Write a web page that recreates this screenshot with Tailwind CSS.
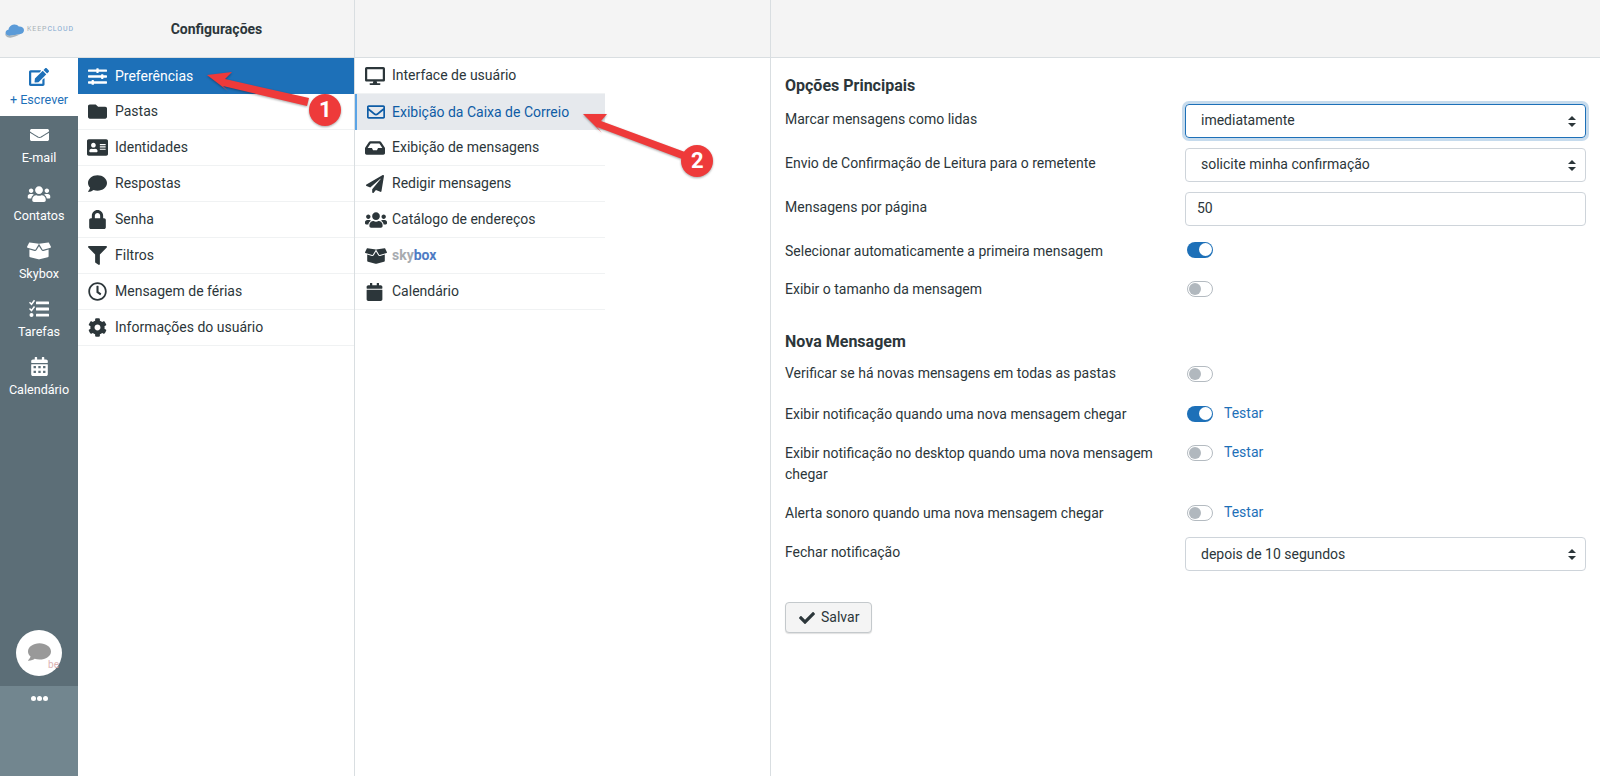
<!DOCTYPE html>
<html lang="pt-BR">
<head>
    <meta charset="UTF-8">
    <title>Configurações</title>
    <script src="https://cdn.jsdelivr.net/npm/@tailwindcss/browser@4"></script>
</head>
<body class="relative h-[776px] w-[1600px] overflow-hidden bg-white font-['Roboto',sans-serif] text-sm leading-[21px] text-[#2c363a]">

    <!-- Top bar -->
    <header class="flex h-[58px] border-b border-[#d9dee1] bg-[#f4f4f4]">
        <div class="flex w-[78px] items-center pl-[5px] pt-[2px]">
            <svg class="h-[16px] w-[20px] shrink-0" viewBox="0 0 20 16"><path fill="#5b9bd8" d="M4 14c-2.4-.3-3.800-2-3.400-3.800.3-1.300 1.400-2.200 2.800-2.400C3.800 5 6 2.800 9 2.600c2-.2 3.800.6 4.800 2 2.800-.3 5 1.300 5.200 3.400.2 2.300-1.800 4-4.500 4.300-3.500.5-7 1.400-10.500 1.700z"/><path fill="#aab4ba" d="M0 11c1 2 3 3 6 2.600 3-.3 6-1.300 9-1.300-3 1.800-7 3.500-10 3.400-3 0-5-2-5-4.700z"/></svg>
            <span class="ml-[2px] whitespace-nowrap text-[7px] leading-none tracking-[0.9px] text-[#a8b1b6]">KEEP<span class="text-[#7fa8d0]">CLOUD</span></span>
        </div>
        <div class="flex w-[277px] items-center justify-center border-r border-[#d9dee1] pl-[1px] text-sm font-bold">Configurações</div>
        <div class="w-[416px] border-r border-[#d9dee1]"></div>
        <div class="flex-1"></div>
    </header>

    <div class="flex h-[718px]">
        <!-- Icon rail -->
        <nav class="flex w-[78px] flex-col text-center text-[12.6px] leading-[15px] text-white">
            <a class="flex h-[58px] flex-col items-center bg-white pt-[10px] text-[#1d70b8]">
                <svg class="mb-[6px] h-[18px] w-[20px]" viewBox="0 0 576 512" fill="currentColor"><path d="M402.6 83.2l90.2 90.2c3.8 3.8 3.8 10 0 13.8L274.4 405.6l-92.8 10.3c-12.4 1.4-22.9-9.1-21.5-21.5l10.3-92.8L388.8 83.2c3.8-3.8 10-3.8 13.8 0zm162-22.9l-48.8-48.8c-15.2-15.2-39.9-15.2-55.2 0l-35.4 35.4c-3.8 3.8-3.8 10 0 13.8l90.2 90.2c3.8 3.8 10 3.8 13.8 0l35.4-35.4c15.2-15.3 15.2-40 0-55.2zM384 346.2V448H64V128h229.8c3.2 0 6.2-1.3 8.5-3.5l40-40c7.6-7.6 2.2-20.5-8.5-20.5H48C21.5 64 0 85.5 0 112v352c0 26.5 21.5 48 48 48h352c26.5 0 48-21.5 48-48V306.2c0-10.7-12.9-16-20.5-8.5l-40 40c-2.2 2.3-3.5 5.3-3.5 8.5z"/></svg>
                + Escrever
            </a>
            <div class="flex flex-1 flex-col bg-[#5c6e77]">
                <a class="flex h-[58px] flex-col items-center pt-[11px]">
                    <svg class="mb-[7px] h-[16px] w-[19px]" viewBox="0 0 512 512" fill="currentColor" preserveAspectRatio="none"><path d="M502.3 190.8c3.9-3.1 9.7-.2 9.7 4.7V400c0 26.5-21.5 48-48 48H48c-26.5 0-48-21.5-48-48V195.6c0-5 5.7-7.8 9.7-4.7 22.4 17.4 52.1 39.5 154.1 113.6 21.1 15.4 56.7 47.8 92.2 47.6 35.7.3 72-32.8 92.3-47.6 102-74.1 131.6-96.3 154-113.7zM256 320c23.2.4 56.6-29.2 73.4-41.4 132.7-96.3 142.8-104.7 173.4-128.7 5.8-4.5 9.2-11.5 9.2-18.9v-19c0-26.5-21.5-48-48-48H48C21.5 64 0 85.5 0 112v19c0 7.4 3.4 14.3 9.2 18.9 30.6 23.9 40.7 32.4 173.4 128.7 16.8 12.2 50.2 41.8 73.4 41.4z"/></svg>
                    E-mail
                </a>
                <a class="flex h-[58px] flex-col items-center pt-[11px]">
                    <svg class="mb-[5px] h-[18px] w-[24px]" viewBox="0 0 640 512" fill="currentColor"><path d="M96 224c35.3 0 64-28.7 64-64s-28.7-64-64-64-64 28.7-64 64 28.7 64 64 64zm448 0c35.3 0 64-28.7 64-64s-28.7-64-64-64-64 28.7-64 64 28.7 64 64 64zm32 32h-64c-17.6 0-33.5 7.1-45.1 18.6 40.3 22.1 68.9 62 75.1 109.4h66c17.7 0 32-14.3 32-32v-32c0-35.3-28.7-64-64-64zm-256 0c61.9 0 112-50.1 112-112S381.9 32 320 32 208 82.1 208 144s50.1 112 112 112zm76.8 32h-8.3c-20.8 10-43.9 16-68.5 16s-47.6-6-68.5-16h-8.3C179.6 288 128 339.6 128 403.2V432c0 26.5 21.5 48 48 48h288c26.5 0 48-21.5 48-48v-28.8c0-63.6-51.6-115.2-115.2-115.2zm-223.7-13.4C161.5 263.1 145.6 256 128 256H64c-35.3 0-64 28.7-64 64v32c0 17.7 14.3 32 32 32h65.9c6.3-47.4 34.9-87.3 75.2-109.4z"/></svg>
                    Contatos
                </a>
                <a class="flex h-[58px] flex-col items-center pt-[9px]">
                    <svg class="mb-[5px] h-[20px] w-[24px]" viewBox="0 0 640 512" fill="currentColor"><path d="M425.7 256c-16.9 0-32.8-9-41.4-23.4L320 126l-64.2 106.6c-8.7 14.5-24.6 23.5-41.5 23.5-4.5 0-9-.6-13.3-1.9L64 215v178c0 14.7 10 27.5 24.2 31l216.2 54.1c10.2 2.5 20.9 2.5 31 0L551.8 424c14.2-3.6 24.2-16.4 24.2-31V215l-137 39.1c-4.3 1.3-8.8 1.9-13.3 1.9zm212.6-112.2L586.8 41c-3.1-6.2-9.8-9.8-16.7-8.9L320 64l91.7 152.1c3.8 6.3 11.4 9.3 18.5 7.3l197.9-56.5c9.9-2.9 14.7-13.9 10.2-23.1zM53.2 41L1.7 143.8c-4.6 9.2.3 20.2 10.1 23l197.9 56.5c7.1 2 14.7-1 18.5-7.3L320 64 69.8 32.1c-6.9-.8-13.5 2.7-16.6 8.9z"/></svg>
                    Skybox
                </a>
                <a class="flex h-[58px] flex-col items-center pt-[9px]">
                    <svg class="mb-[5px] h-[20px] w-[20px]" viewBox="0 0 20 20" fill="currentColor"><rect x="7" y="2.5" width="13" height="2.8" rx=".5"/><rect x="7" y="8.6" width="13" height="2.8" rx=".5"/><rect x="7" y="14.7" width="13" height="2.8" rx=".5"/><circle cx="2.5" cy="16" r="2"/><path d="M.5 3.3l2 2 3-4M.5 9.500l2 2 3-4" fill="none" stroke="currentColor" stroke-width="1.5"/></svg>
                    Tarefas
                </a>
                <a class="flex h-[58px] flex-col items-center pt-[9px]">
                    <svg class="mb-[6px] h-[19px] w-[17px]" viewBox="0 0 448 512" fill="currentColor"><path d="M12 192h424c6.6 0 12 5.4 12 12v260c0 26.5-21.5 48-48 48H48c-26.5 0-48-21.5-48-48V204c0-6.6 5.4-12 12-12zm436-44v-36c0-26.5-21.5-48-48-48h-48V12c0-6.6-5.4-12-12-12h-40c-6.6 0-12 5.4-12 12v52H160V12c0-6.6-5.4-12-12-12h-40c-6.6 0-12 5.4-12 12v52H48C21.5 64 0 85.5 0 112v36c0 6.6 5.4 12 12 12h424c6.6 0 12-5.4 12-12z"/><path fill="#5c6e77" d="M64 240h64v64H64zM192 240h64v64h-64zM320 240h64v64h-64zM64 368h64v64H64zM192 368h64v64h-64zM320 368h64v64h-64z"/></svg>
                    Calendário
                </a>
                <div class="mt-auto flex h-[56px] items-end justify-center pb-[10px]">
                    <div class="relative flex h-[46px] w-[46px] items-center justify-center rounded-full bg-white">
                        <svg class="mb-[3px] h-[20px] w-[23px]" viewBox="0 0 512 512" fill="#999" preserveAspectRatio="none"><path d="M256 32C114.6 32 0 125.1 0 240c0 49.6 21.4 95 57 130.7C44.5 421.1 2.7 466 2.2 466.5c-2.2 2.3-2.8 5.7-1.5 8.7S4.8 480 8 480c66.3 0 116-31.8 140.6-51.4 32.7 12.3 69 19.4 107.4 19.4 141.4 0 256-93.1 256-208S397.4 32 256 32z"/></svg>
                        <span class="absolute right-[3px] bottom-[6px] text-[10px] leading-none text-[#dcb4b4]">be</span>
                    </div>
                </div>
            </div>
            <div class="flex h-[90px] justify-center bg-[#72868f] pt-[10px]">
                <span class="flex h-[6px] gap-[1px]">
                    <i class="h-[5px] w-[5px] rounded-full bg-white"></i><i class="h-[5px] w-[5px] rounded-full bg-white"></i><i class="h-[5px] w-[5px] rounded-full bg-white"></i>
                </span>
            </div>
        </nav>

        <!-- Settings sections -->
        <ul class="w-[277px] border-r border-[#d9dee1]">
            <li class="flex h-[36px] items-center bg-[#1d70b8] pl-[10px] text-white">
                <svg class="mr-[8px] h-[19px] w-[19px]" viewBox="0 0 512 512" fill="currentColor"><path d="M496 384H160v-16c0-8.8-7.2-16-16-16h-32c-8.8 0-16 7.2-16 16v16H16c-8.8 0-16 7.2-16 16v32c0 8.8 7.2 16 16 16h80v16c0 8.8 7.2 16 16 16h32c8.8 0 16-7.2 16-16v-16h336c8.8 0 16-7.2 16-16v-32c0-8.8-7.2-16-16-16zm0-160h-80v-16c0-8.8-7.2-16-16-16h-32c-8.8 0-16 7.2-16 16v16H16c-8.8 0-16 7.2-16 16v32c0 8.8 7.2 16 16 16h336v16c0 8.8 7.2 16 16 16h32c8.8 0 16-7.2 16-16v-16h80c8.8 0 16-7.2 16-16v-32c0-8.8-7.2-16-16-16zm0-160H288V48c0-8.8-7.2-16-16-16h-32c-8.8 0-16 7.2-16 16v16H16C7.2 64 0 71.2 0 80v32c0 8.8 7.2 16 16 16h208v16c0 8.8 7.2 16 16 16h32c8.8 0 16-7.2 16-16v-16h208c8.8 0 16-7.2 16-16V80c0-8.8-7.2-16-16-16z"/></svg>
                Preferências
            </li>
            <li class="flex h-[36px] items-center border-b border-[#f0f2f3] pl-[10px]">
                <svg class="mr-[8px] h-[19px] w-[19px]" viewBox="0 0 512 512" fill="currentColor"><path d="M464 128H272l-64-64H48C21.49 64 0 85.49 0 112v288c0 26.51 21.49 48 48 48h416c26.51 0 48-21.49 48-48V176c0-26.51-21.49-48-48-48z"/></svg>
                Pastas
            </li>
            <li class="flex h-[36px] items-center border-b border-[#f0f2f3] pl-[9px]">
                <svg class="mr-[7px] h-[19px] w-[21px]" viewBox="0 0 576 512" fill="currentColor"><path d="M528 32H48C21.5 32 0 53.5 0 80v352c0 26.5 21.5 48 48 48h480c26.5 0 48-21.5 48-48V80c0-26.5-21.5-48-48-48zm-352 96c35.3 0 64 28.7 64 64s-28.7 64-64 64-64-28.7-64-64 28.7-64 64-64zm112 236.8c0 10.6-10 19.2-22.4 19.2H86.4C74 384 64 375.4 64 364.8v-19.2c0-31.8 30.1-57.6 67.2-57.6h5c12.3 5.1 25.7 8 39.8 8s27.6-2.9 39.8-8h5c37.1 0 67.2 25.8 67.2 57.6v19.2zM512 312c0 4.4-3.6 8-8 8H360c-4.4 0-8-3.6-8-8v-16c0-4.4 3.6-8 8-8h144c4.4 0 8 3.6 8 8v16zm0-64c0 4.4-3.6 8-8 8H360c-4.4 0-8-3.6-8-8v-16c0-4.4 3.6-8 8-8h144c4.4 0 8 3.6 8 8v16zm0-64c0 4.4-3.6 8-8 8H360c-4.4 0-8-3.6-8-8v-16c0-4.4 3.6-8 8-8h144c4.4 0 8 3.6 8 8v16z"/></svg>
                Identidades
            </li>
            <li class="flex h-[36px] items-center border-b border-[#f0f2f3] pl-[10px]">
                <svg class="mr-[8px] h-[19px] w-[19px]" viewBox="0 0 512 512" fill="currentColor"><path d="M256 32C114.6 32 0 125.1 0 240c0 49.6 21.4 95 57 130.7C44.5 421.1 2.7 466 2.2 466.5c-2.2 2.3-2.8 5.7-1.5 8.7S4.8 480 8 480c66.3 0 116-31.8 140.6-51.4 32.7 12.3 69 19.4 107.4 19.4 141.4 0 256-93.1 256-208S397.4 32 256 32z"/></svg>
                Respostas
            </li>
            <li class="flex h-[36px] items-center border-b border-[#f0f2f3] pl-[10px]">
                <svg class="mr-[8px] h-[19px] w-[19px]" viewBox="0 0 448 512" fill="currentColor"><path d="M400 224h-24v-72C376 68.2 307.8 0 224 0S72 68.2 72 152v72H48c-26.5 0-48 21.5-48 48v192c0 26.5 21.5 48 48 48h352c26.5 0 48-21.5 48-48V272c0-26.5-21.5-48-48-48zm-104 0H152v-72c0-39.7 32.3-72 72-72s72 32.3 72 72v72z"/></svg>
                Senha
            </li>
            <li class="flex h-[36px] items-center border-b border-[#f0f2f3] pl-[10px]">
                <svg class="mr-[8px] h-[19px] w-[19px]" viewBox="0 0 512 512" fill="currentColor"><path d="M487.976 0H24.028C2.71 0-8.047 25.866 7.058 40.971L192 225.941V432c0 7.831 3.821 15.17 10.237 19.662l80 55.98C298.02 518.69 320 507.493 320 487.98V225.941l184.947-184.97C520.021 25.896 509.338 0 487.976 0z"/></svg>
                Filtros
            </li>
            <li class="flex h-[36px] items-center border-b border-[#f0f2f3] pl-[10px]">
                <svg class="mr-[8px] h-[19px] w-[19px]" viewBox="0 0 512 512" fill="currentColor"><path d="M256 8C119 8 8 119 8 256s111 248 248 248 248-111 248-248S393 8 256 8zm0 448c-110.5 0-200-89.5-200-200S145.5 56 256 56s200 89.5 200 200-89.5 200-200 200zm61.8-104.4l-84.9-61.7c-3.1-2.3-4.9-5.9-4.9-9.7V116c0-6.6 5.4-12 12-12h32c6.6 0 12 5.4 12 12v141.7l66.8 48.6c5.4 3.9 6.5 11.4 2.6 16.8L334.6 349c-3.9 5.3-11.4 6.5-16.8 2.6z"/></svg>
                Mensagem de férias
            </li>
            <li class="flex h-[36px] items-center border-b border-[#f0f2f3] pl-[10px]">
                <svg class="mr-[8px] h-[19px] w-[19px]" viewBox="0 0 512 512" fill="currentColor"><path d="M487.4 315.7l-42.6-24.6c4.3-23.2 4.3-47 0-70.2l42.6-24.6c4.9-2.8 7.1-8.6 5.5-14-11.1-35.6-30-67.8-54.7-94.6-3.8-4.1-10-5.1-14.8-2.3L380.8 110c-17.9-15.4-38.5-27.3-60.8-35.1V25.8c0-5.6-3.9-10.5-9.4-11.7-36.7-8.2-74.3-7.8-109.2 0-5.5 1.2-9.4 6.1-9.4 11.7V75c-22.2 7.9-42.8 19.8-60.8 35.1L88.7 85.5c-4.9-2.8-11-1.9-14.8 2.3-24.7 26.7-43.6 58.9-54.7 94.6-1.7 5.4.6 11.2 5.5 14L67.3 221c-4.3 23.2-4.3 47 0 70.2l-42.6 24.6c-4.9 2.8-7.1 8.6-5.5 14 11.1 35.6 30 67.8 54.7 94.6 3.8 4.1 10 5.1 14.8 2.3l42.6-24.6c17.9 15.4 38.5 27.3 60.8 35.1v49.2c0 5.6 3.9 10.5 9.4 11.7 36.7 8.2 74.3 7.8 109.2 0 5.5-1.2 9.4-6.1 9.4-11.7v-49.2c22.2-7.9 42.8-19.8 60.8-35.1l42.6 24.6c4.9 2.8 11 1.9 14.8-2.3 24.7-26.7 43.6-58.9 54.7-94.6 1.5-5.5-.7-11.3-5.6-14.1zM256 336c-44.1 0-80-35.9-80-80s35.9-80 80-80 80 35.9 80 80-35.9 80-80 80z"/></svg>
                Informações do usuário
            </li>
        </ul>

        <!-- Sub sections -->
        <div class="w-[416px] border-r border-[#d9dee1]">
            <ul class="w-[250px]">
                <li class="flex h-[36px] items-center border-b border-[#f0f2f3] pl-[10px]">
                    <svg class="mr-[7px] h-[18px] w-[20px]" viewBox="0 0 576 512" fill="currentColor"><path d="M528 0H48C21.5 0 0 21.5 0 48v320c0 26.5 21.5 48 48 48h192l-16 48h-72c-13.3 0-24 10.7-24 24s10.7 24 24 24h272c13.3 0 24-10.7 24-24s-10.7-24-24-24h-72l-16-48h192c26.5 0 48-21.5 48-48V48c0-26.5-21.5-48-48-48zm-16 352H64V64h448v288z"/></svg>
                    Interface de usuário
                </li>
                <li class="flex h-[36px] items-center border-l-2 border-[#5ba4e6] bg-[#e6e9ed] pl-[10px] text-[#0e5ca5]">
                    <svg class="mr-[7px] h-[18px] w-[18px]" viewBox="0 0 512 512" fill="currentColor"><path d="M464 64H48C21.49 64 0 85.49 0 112v288c0 26.51 21.49 48 48 48h416c26.51 0 48-21.49 48-48V112c0-26.51-21.49-48-48-48zm0 48v40.805c-22.422 18.259-58.168 46.651-134.587 106.49-16.841 13.247-50.201 45.072-73.413 44.701-23.208.375-56.579-31.459-73.413-44.701C106.18 199.465 70.425 171.067 48 152.805V112h416zM48 400V214.398c22.914 18.251 55.409 43.862 104.938 82.646 21.857 17.205 60.134 55.186 103.062 54.955 42.717.231 80.509-37.199 103.053-54.947 49.528-38.783 82.032-64.401 104.947-82.653V400H48z"/></svg>
                    Exibição da Caixa de Correio
                </li>
                <li class="flex h-[36px] items-center border-b border-[#f0f2f3] pl-[10px]">
                    <svg class="mr-[7px] h-[18px] w-[20px]" viewBox="0 0 576 512" fill="currentColor"><path d="M567.938 243.908L462.25 85.374A48.003 48.003 0 0 0 422.311 64H153.689a48 48 0 0 0-39.938 21.374L8.062 243.908A47.994 47.994 0 0 0 0 270.533V400c0 26.51 21.49 48 48 48h480c26.51 0 48-21.49 48-48V270.533a47.994 47.994 0 0 0-8.062-26.625zM162.252 128h251.497l85.333 128H376l-32 64H232l-32-64H76.918l85.334-128z"/></svg>
                    Exibição de mensagens
                </li>
                <li class="flex h-[36px] items-center border-b border-[#f0f2f3] pl-[11px]">
                    <svg class="mr-[8px] h-[18px] w-[18px]" viewBox="0 0 512 512" fill="currentColor"><path d="M476 3.2L12.5 270.6c-18.1 10.4-15.8 35.6 2.2 43.2L121 358.4l287.3-253.2c5.5-4.9 13.3 2.6 8.6 8.3L176 407v80.5c0 23.6 28.5 32.9 42.5 15.8L282 426l124.6 52.2c14.2 6 30.4-2.9 33-18.2l72-432C515 7.8 493.3-6.8 476 3.2z"/></svg>
                    Redigir mensagens
                </li>
                <li class="flex h-[36px] items-center border-b border-[#f0f2f3] pl-[10px]">
                    <svg class="mr-[5px] h-[18px] w-[22px]" viewBox="0 0 640 512" fill="currentColor"><path d="M96 224c35.3 0 64-28.7 64-64s-28.7-64-64-64-64 28.7-64 64 28.7 64 64 64zm448 0c35.3 0 64-28.7 64-64s-28.7-64-64-64-64 28.7-64 64 28.7 64 64 64zm32 32h-64c-17.6 0-33.5 7.1-45.1 18.6 40.3 22.1 68.9 62 75.1 109.4h66c17.7 0 32-14.3 32-32v-32c0-35.3-28.7-64-64-64zm-256 0c61.9 0 112-50.1 112-112S381.9 32 320 32 208 82.1 208 144s50.1 112 112 112zm76.8 32h-8.3c-20.8 10-43.9 16-68.5 16s-47.6-6-68.5-16h-8.3C179.6 288 128 339.6 128 403.2V432c0 26.5 21.5 48 48 48h288c26.5 0 48-21.5 48-48v-28.8c0-63.6-51.6-115.2-115.2-115.2zm-223.7-13.4C161.5 263.1 145.6 256 128 256H64c-35.3 0-64 28.7-64 64v32c0 17.7 14.3 32 32 32h65.9c6.3-47.4 34.9-87.3 75.2-109.4z"/></svg>
                    Catálogo de endereços
                </li>
                <li class="flex h-[36px] items-center border-b border-[#f0f2f3] pl-[10px] font-bold">
                    <svg class="mr-[5px] h-[18px] w-[22px]" viewBox="0 0 640 512" fill="currentColor"><path d="M425.7 256c-16.9 0-32.8-9-41.4-23.4L320 126l-64.2 106.6c-8.7 14.5-24.6 23.5-41.5 23.5-4.5 0-9-.6-13.3-1.9L64 215v178c0 14.7 10 27.5 24.2 31l216.2 54.1c10.2 2.5 20.9 2.5 31 0L551.8 424c14.2-3.6 24.2-16.4 24.2-31V215l-137 39.1c-4.3 1.3-8.8 1.9-13.3 1.9zm212.6-112.2L586.8 41c-3.1-6.2-9.8-9.8-16.7-8.9L320 64l91.7 152.1c3.8 6.3 11.4 9.3 18.5 7.3l197.9-56.5c9.9-2.9 14.7-13.9 10.2-23.1zM53.2 41L1.7 143.8c-4.6 9.2.3 20.2 10.1 23l197.9 56.5c7.1 2 14.7-1 18.5-7.3L320 64 69.8 32.1c-6.9-.8-13.5 2.7-16.6 8.9z"/></svg>
                    <span class="text-[#a7abb0]">sky</span><span class="text-[#4f7cc4]">box</span>
                </li>
                <li class="flex h-[36px] items-center border-b border-[#f0f2f3] pl-[11px]">
                    <svg class="mr-[9px] h-[18px] w-[17px]" viewBox="0 0 448 512" fill="currentColor"><path d="M12 192h424c6.6 0 12 5.4 12 12v260c0 26.5-21.5 48-48 48H48c-26.5 0-48-21.5-48-48V204c0-6.6 5.4-12 12-12zm436-44v-36c0-26.5-21.5-48-48-48h-48V12c0-6.6-5.4-12-12-12h-40c-6.6 0-12 5.4-12 12v52H160V12c0-6.6-5.4-12-12-12h-40c-6.6 0-12 5.4-12 12v52H48C21.5 64 0 85.5 0 112v36c0 6.6 5.4 12 12 12h424c6.6 0 12-5.4 12-12z"/></svg>
                    Calendário
                </li>
            </ul>
        </div>

        <!-- Options form -->
        <main class="flex-1 pl-[14px]">
            <h2 class="flex h-[46px] items-start pt-[18px] text-base leading-[20px] font-bold">Opções Principais</h2>

            <div class="grid h-[44px] grid-cols-[400px_401px]">
                <label class="pt-[5px]">Marcar mensagens como lidas</label>
                <div class="relative flex h-[34px] items-center rounded border border-[#1d70b8] pb-[1px] pl-[15px] shadow-[0_0_0_3px_rgba(29,112,184,0.25)]">
                    imediatamente
                    <svg class="absolute right-[9px] top-[11px] h-[11px] w-[8px]" viewBox="0 0 8 11" fill="#2c363a"><path d="M4 0l4 4H0zM4 11l4-4H0z"/></svg>
                </div>
            </div>
            <div class="grid h-[44px] grid-cols-[400px_401px]">
                <label class="pt-[5px]">Envio de Confirmação de Leitura para o remetente</label>
                <div class="relative flex h-[34px] items-center rounded border border-[#ced4da] pb-[1px] pl-[15px]">
                    solicite minha confirmação
                    <svg class="absolute right-[9px] top-[11px] h-[11px] w-[8px]" viewBox="0 0 8 11" fill="#2c363a"><path d="M4 0l4 4H0zM4 11l4-4H0z"/></svg>
                </div>
            </div>
            <div class="grid h-[47px] grid-cols-[400px_401px]">
                <label class="pt-[5px]">Mensagens por página</label>
                <div class="flex h-[34px] items-center rounded border border-[#ced4da] pb-[1px] pl-[11px]">50</div>
            </div>
            <div class="grid h-[39px] grid-cols-[400px_401px]">
                <label class="pt-[2px]">Selecionar automaticamente a primeira mensagem</label>
                <div class="flex h-[21px] items-center">
                    <span class="ml-[2px] flex h-[16px] w-[26px] items-center justify-end rounded-full bg-[#1d70b8] pr-[1px]"><i class="h-[13px] w-[13px] rounded-full bg-white"></i></span>
                </div>
            </div>
            <div class="grid h-[39px] grid-cols-[400px_401px]">
                <label class="pt-[1px]">Exibir o tamanho da mensagem</label>
                <div class="flex h-[21px] items-center">
                    <span class="ml-[2px] flex h-[16px] w-[26px] items-center rounded-full border border-[#b4bbc1] pl-[1px]"><i class="h-[12px] w-[12px] rounded-full bg-[#b1b8be]"></i></span>
                </div>
            </div>

            <h2 class="flex h-[46px] items-start pt-[15px] text-base leading-[20px] font-bold">Nova Mensagem</h2>

            <div class="grid h-[40px] grid-cols-[400px_401px]">
                <label>Verificar se há novas mensagens em todas as pastas</label>
                <div class="flex h-[21px] items-center">
                    <span class="ml-[2px] flex h-[16px] w-[26px] items-center rounded-full border border-[#b4bbc1] pl-[1px]"><i class="h-[12px] w-[12px] rounded-full bg-[#b1b8be]"></i></span>
                </div>
            </div>
            <div class="grid h-[39px] grid-cols-[400px_401px]">
                <label class="pt-[1px]">Exibir notificação quando uma nova mensagem chegar</label>
                <div class="flex h-[21px] items-center">
                    <span class="ml-[2px] flex h-[16px] w-[26px] items-center justify-end rounded-full bg-[#1d70b8] pr-[1px]"><i class="h-[13px] w-[13px] rounded-full bg-white"></i></span>
                    <a class="ml-[11px] text-[#1d70b8]">Testar</a>
                </div>
            </div>
            <div class="grid h-[60px] grid-cols-[400px_401px]">
                <label class="pt-[1px] pr-[20px]">Exibir notificação no desktop quando uma nova mensagem chegar</label>
                <div class="flex h-[21px] items-center">
                    <span class="ml-[2px] flex h-[16px] w-[26px] items-center rounded-full border border-[#b4bbc1] pl-[1px]"><i class="h-[12px] w-[12px] rounded-full bg-[#b1b8be]"></i></span>
                    <a class="ml-[11px] text-[#1d70b8]">Testar</a>
                </div>
            </div>
            <div class="grid h-[35px] grid-cols-[400px_401px]">
                <label class="pt-[1px]">Alerta sonoro quando uma nova mensagem chegar</label>
                <div class="flex h-[21px] items-center">
                    <span class="ml-[2px] flex h-[16px] w-[26px] items-center rounded-full border border-[#b4bbc1] pl-[1px]"><i class="h-[12px] w-[12px] rounded-full bg-[#b1b8be]"></i></span>
                    <a class="ml-[11px] text-[#1d70b8]">Testar</a>
                </div>
            </div>
            <div class="grid h-[65px] grid-cols-[400px_401px]">
                <label class="pt-[5px]">Fechar notificação</label>
                <div class="relative flex h-[34px] items-center rounded border border-[#ced4da] pl-[15px]">
                    depois de 10 segundos
                    <svg class="absolute right-[9px] top-[11px] h-[11px] w-[8px]" viewBox="0 0 8 11" fill="#2c363a"><path d="M4 0l4 4H0zM4 11l4-4H0z"/></svg>
                </div>
            </div>

            <button class="flex h-[31px] w-[87px] items-center rounded border border-[#c4c9cc] bg-[#f4f4f4] pl-[12px] shadow-[0_1px_1px_rgba(0,0,0,0.12)]">
                <svg class="mr-[5px] h-[16px] w-[18px]" viewBox="0 0 512 512" fill="currentColor"><path d="M173.898 439.404l-166.4-166.4c-9.997-9.997-9.997-26.206 0-36.204l36.203-36.204c9.997-9.998 26.207-9.998 36.204 0L192 312.69 432.095 72.596c9.997-9.997 26.207-9.997 36.204 0l36.203 36.204c9.997 9.997 9.997 26.206 0 36.204l-294.4 294.401c-9.998 9.997-26.207 9.997-36.204-.001z"/></svg>
                Salvar
            </button>
        </main>
    </div>

    <!-- Annotation arrows drawn over the screenshot -->
    <svg class="absolute left-0 top-0 drop-shadow-[0_1px_1px_rgba(0,0,0,0.35)]" width="1600" height="776" viewBox="0 0 1600 776">
        <path fill="#ee3a3a" d="M207 75L232 72L225 79L309 98L307 106L223 86L228 91z"/>
        <path fill="#ee3a3a" d="M583 114L607 114L601 121L685 152L682 159L597 127L602 133z"/>
        <circle cx="325" cy="110" r="16" fill="#ee3a3a"/>
        <circle cx="697" cy="161" r="16" fill="#ee3a3a"/>
    </svg>
    <span class="absolute left-[319px] top-[98px] text-[22px] leading-[24px] font-bold text-white">1</span>
    <span class="absolute left-[691px] top-[149px] text-[22px] leading-[24px] font-bold text-white">2</span>
</body>
</html>
